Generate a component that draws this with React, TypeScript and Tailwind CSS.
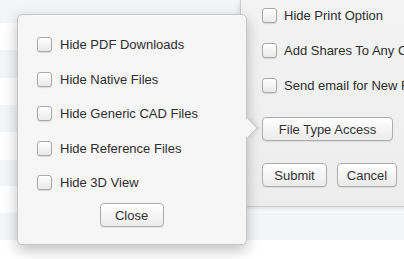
import React from "react";

const font = { fontFamily: '"Liberation Sans", Arial, Helvetica, sans-serif' };

function Box() {
  return (
    <span className="block w-[15px] h-[15px] shrink-0 rounded-[3px] border border-[#a8a8a8] bg-linear-to-b from-white to-[#e9e9e9] shadow-[0_1px_1px_rgba(0,0,0,0.12)]" />
  );
}

function Check({ label, gap }: { label: string; gap: string }) {
  return (
    <div className={`flex items-center h-[15px] whitespace-nowrap ${gap}`}>
      <Box />
      <span className="text-[13px] leading-none text-[#2e2e2e]">{label}</span>
    </div>
  );
}

function Btn({ label, w }: { label: string; w: string }) {
  return (
    <button
      className={`${w} h-[24px] flex items-center justify-center rounded-[4px] border border-[#adadad] bg-linear-to-b from-white to-[#ebebeb] text-[13px] leading-none text-[#333] shadow-[0_1px_1px_rgba(0,0,0,0.08)]`}
    >
      {label}
    </button>
  );
}

export default function App() {
  const stripes = [
    { h: "h-[23px]", c: "bg-[#f2f6f9]" },
    { h: "h-[27px]", c: "bg-white" },
    { h: "h-[28px]", c: "bg-[#f2f6f9]" },
    { h: "h-[27px]", c: "bg-white" },
    { h: "h-[27px]", c: "bg-[#f2f6f9]" },
    { h: "h-[28px]", c: "bg-white" },
    { h: "h-[26px]", c: "bg-[#f2f6f9]" },
    { h: "h-[27px]", c: "bg-white" },
    { h: "h-[27px]", c: "bg-[#f2f6f9]" },
    { h: "h-[19px]", c: "bg-white" },
  ];
  return (
    <div className="relative w-[404px] h-[259px] overflow-hidden bg-white" style={font}>
      <div className="flex flex-col">
        {stripes.map((s, i) => (
          <div key={i} className={`${s.h} ${s.c} w-full`} />
        ))}
      </div>

      {/* right dialog panel */}
      <div className="absolute left-[240px] top-0 w-[220px] h-[207px] bg-linear-to-b from-[#f3f3f3] to-[#ededed] border-l border-b border-[#cdcdcd] shadow-[0_2px_6px_rgba(0,0,0,0.14)] pl-[21px] pt-[8px] flex flex-col">
        <div className="flex flex-col gap-[20px]">
          <Check label="Hide Print Option" gap="gap-[7px]" />
          <Check label="Add Shares To Any Company" gap="gap-[7px]" />
          <Check label="Send email for New Files" gap="gap-[7px]" />
        </div>
        <div className="mt-[24px]">
          <Btn label="File Type Access" w="w-[131px]" />
        </div>
        <div className="mt-[22px] flex gap-[10px]">
          <Btn label="Submit" w="w-[65px]" />
          <Btn label="Cancel" w="w-[60px]" />
        </div>
      </div>

      {/* popover */}
      <div className="absolute left-[17px] top-[14px] w-[230px] h-[231px] rounded-[5px] border border-[#c6c6c6] bg-[#f6f6f6] shadow-[0_5px_14px_rgba(0,0,0,0.25)]">
        <div className="absolute right-[-9px] top-[106px] w-[14px] h-[14px] rotate-45 bg-[#f6f6f6] border-t border-r border-[#c6c6c6] shadow-[2px_-2px_3px_rgba(0,0,0,0.08)]" />
        <div className="relative flex flex-col pl-[19px] pt-[22px]">
          <div className="flex flex-col gap-[19.5px]">
            <Check label="Hide PDF Downloads" gap="gap-[8px]" />
            <Check label="Hide Native Files" gap="gap-[8px]" />
            <Check label="Hide Generic CAD Files" gap="gap-[8px]" />
            <Check label="Hide Reference Files" gap="gap-[8px]" />
            <Check label="Hide 3D View" gap="gap-[8px]" />
          </div>
        </div>
        <div className="relative flex justify-center mt-[13px] pr-[1px]">
          <Btn label="Close" w="w-[64px]" />
        </div>
      </div>
    </div>
  );
}
